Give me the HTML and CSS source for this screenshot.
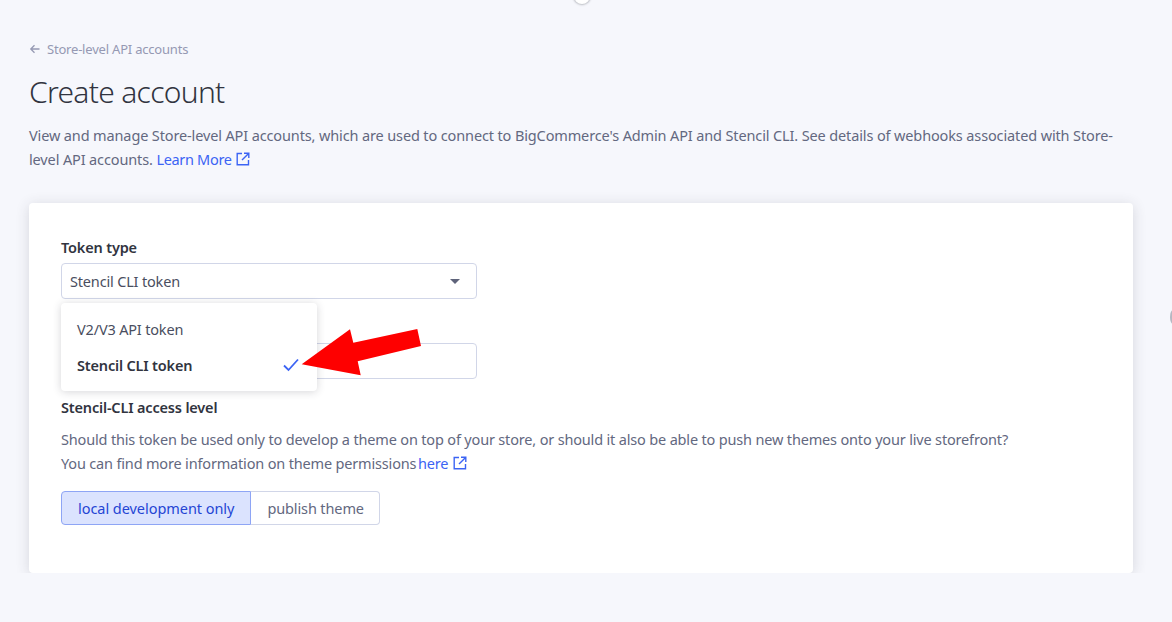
FILE: index.html
```html
<!DOCTYPE html>
<html lang="en">
<head>
    <meta charset="UTF-8">
    <title>Create account</title>
    <link rel="stylesheet" href="styles.css">
</head>
<body>

<div class="top-handle"></div>
<div class="side-handle"></div>

<div class="page">
    <a class="back-link" href="#">
        <svg class="back-icon" viewBox="0 0 12 12"><path d="M10.5 6H2M5.5 2.3L1.8 6l3.7 3.7" /></svg>
        Store-level API accounts
    </a>
    <h1>Create account</h1>
    <p class="intro">View and manage Store-level API accounts, which are used to connect to BigCommerce's Admin API and Stencil CLI. See details of webhooks associated with Store-level API accounts. <a href="#">Learn More <svg class="ext-icon" viewBox="0 0 14 14"><path d="M6 1.5H1.2v11.3h11.3V8M8 1.2h4.8V6M12.6 1.4L6 8" /></svg></a></p>

    <div class="card">
        <!-- Token type select + open menu -->
        <div class="field">
            <label>Token type</label>
            <div class="select">
                <span>Stencil CLI token</span>
                <span class="caret"></span>
            </div>
            <div class="menu">
                <div class="menu-item">V2/V3 API token</div>
                <div class="menu-item selected">
                    Stencil CLI token
                    <svg class="check" viewBox="0 0 16 14"><path d="M1 7.5l4.5 4.5L15 1.5" /></svg>
                </div>
            </div>
        </div>

        <div class="field">
            <div class="select-spacer"></div>
            <div class="select"></div>
        </div>

        <h2>Stencil-CLI access level</h2>
        <p class="help">Should this token be used only to develop a theme on top of your store, or should it also be able to push new themes onto your live storefront?<br>
        You can find more information on theme permissions <a href="#">here <svg class="ext-icon" viewBox="0 0 14 14"><path d="M6 1.5H1.2v11.3h11.3V8M8 1.2h4.8V6M12.6 1.4L6 8" /></svg></a></p>

        <div class="toggle">
            <button class="active">local development only</button>
            <button>publish theme</button>
        </div>

        <!-- red annotation arrow -->
        <svg class="arrow" viewBox="0 0 124 50"><polygon points="1.7,36.3 50,1.3 53.3,14.7 117.3,1 121,18 57.7,33.3 60.7,47.3" /></svg>
    </div>
</div>

</body>
</html>
```

FILE: styles.css
```css
body {
    font-family: "Noto Sans", Arial, sans-serif;
    font-size: 14.5px;
    line-height: 24px;
    letter-spacing: -0.17px;
    background-color: #f6f7fc;
    color: #636880;
    margin: 0;
    padding: 0;
    overflow: hidden;
}
a {
    color: #3c64f4;
    text-decoration: none;
}
.top-handle {
    position: absolute;
    left: 574px;
    top: -12px;
    width: 16px;
    height: 16px;
    background-color: white;
    border-radius: 50%;
    box-shadow: 0 0 2px 1px rgba(49, 52, 64, 0.3);
}
.side-handle {
    position: absolute;
    right: -4px;
    top: 310px;
    width: 6px;
    height: 14px;
    background-color: #b5b8c2;
    border-radius: 50%;
}
.page {
    padding: 37px 39px 0 29px;
}
.back-link {
    display: flex;
    align-items: center;
    gap: 6px;
    font-size: 13px;
    letter-spacing: -0.2px;
    color: #9599b3;
}
.back-icon {
    width: 12px;
    height: 12px;
    fill: none;
    stroke: #9599b3;
    stroke-width: 1.3;
}
h1 {
    font-weight: 300;
    font-size: 30px;
    letter-spacing: -0.7px;
    line-height: 40px;
    color: #313440;
    margin: 11px 0 11px;
}
.intro {
    max-width: 1086px;
    letter-spacing: -0.13px;
    margin: 0 0 32px;
}
.intro a {
    letter-spacing: -0.32px;
}
.ext-icon {
    width: 14px;
    height: 14px;
    margin-left: 1px;
    vertical-align: -1px;
    fill: none;
    stroke: #3c64f4;
    stroke-width: 1.4;
}
.card {
    position: relative;
    height: 306px;
    padding: 32px;
    background-color: white;
    border-radius: 4px;
    box-shadow: 0 2px 14px rgba(49, 52, 64, 0.16);
}
.field {
    position: relative;
    width: 416px;
    margin-bottom: 16px;
}
.select-spacer {
    height: 24px;
}
label, h2 {
    display: block;
    font-size: 14.5px;
    font-weight: 600;
    line-height: 24px;
    color: #313440;
    margin: 0;
}
label, .select-spacer {
    margin-bottom: 4px;
}
.select {
    display: flex;
    align-items: center;
    justify-content: space-between;
    box-sizing: border-box;
    height: 36px;
    padding: 0 16px 0 8px;
    background-color: white;
    border: 1px solid #d1d6e8;
    border-radius: 4px;
    color: #4a4e60;
}
.caret {
    border-left: 5px solid transparent;
    border-right: 5px solid transparent;
    border-top: 5px solid #5e637a;
}
.menu {
    position: absolute;
    z-index: 2;
    left: 0;
    top: 68px;
    width: 256px;
    box-sizing: border-box;
    padding: 8px 0;
    background-color: white;
    border-radius: 4px;
    box-shadow: 0 1px 8px rgba(49, 52, 64, 0.2);
}
.menu-item {
    display: flex;
    align-items: center;
    justify-content: space-between;
    height: 36px;
    padding: 0 18px 0 16px;
    color: #4a4e60;
}
.selected {
    font-weight: 600;
    color: #313440;
}
.check {
    width: 16px;
    height: 14px;
    fill: none;
    stroke: #3c64f4;
    stroke-width: 1.8;
}
h2 {
    margin-bottom: 8px;
}
.help {
    margin: 0 0 16px;
}
.help a {
    margin-left: -2px;
}
.toggle {
    display: flex;
}
.toggle button {
    height: 34px;
    padding: 0 15px 0 16px;
    font-family: inherit;
    font-size: 14.5px;
    letter-spacing: -0.12px;
    color: #636880;
    background-color: white;
    border: 1px solid #d1d6e8;
    border-left: none;
    border-radius: 0 4px 4px 0;
}
.toggle .active {
    padding: 0 16px;
    letter-spacing: -0.05px;
    color: #2445d4;
    background-color: #dbe3fe;
    border: 1px solid #8ea5f5;
    border-radius: 4px 0 0 4px;
}
.arrow {
    position: absolute;
    z-index: 3;
    left: 271px;
    top: 125px;
    width: 124px;
    height: 50px;
    fill: #fe0000;
}
```
